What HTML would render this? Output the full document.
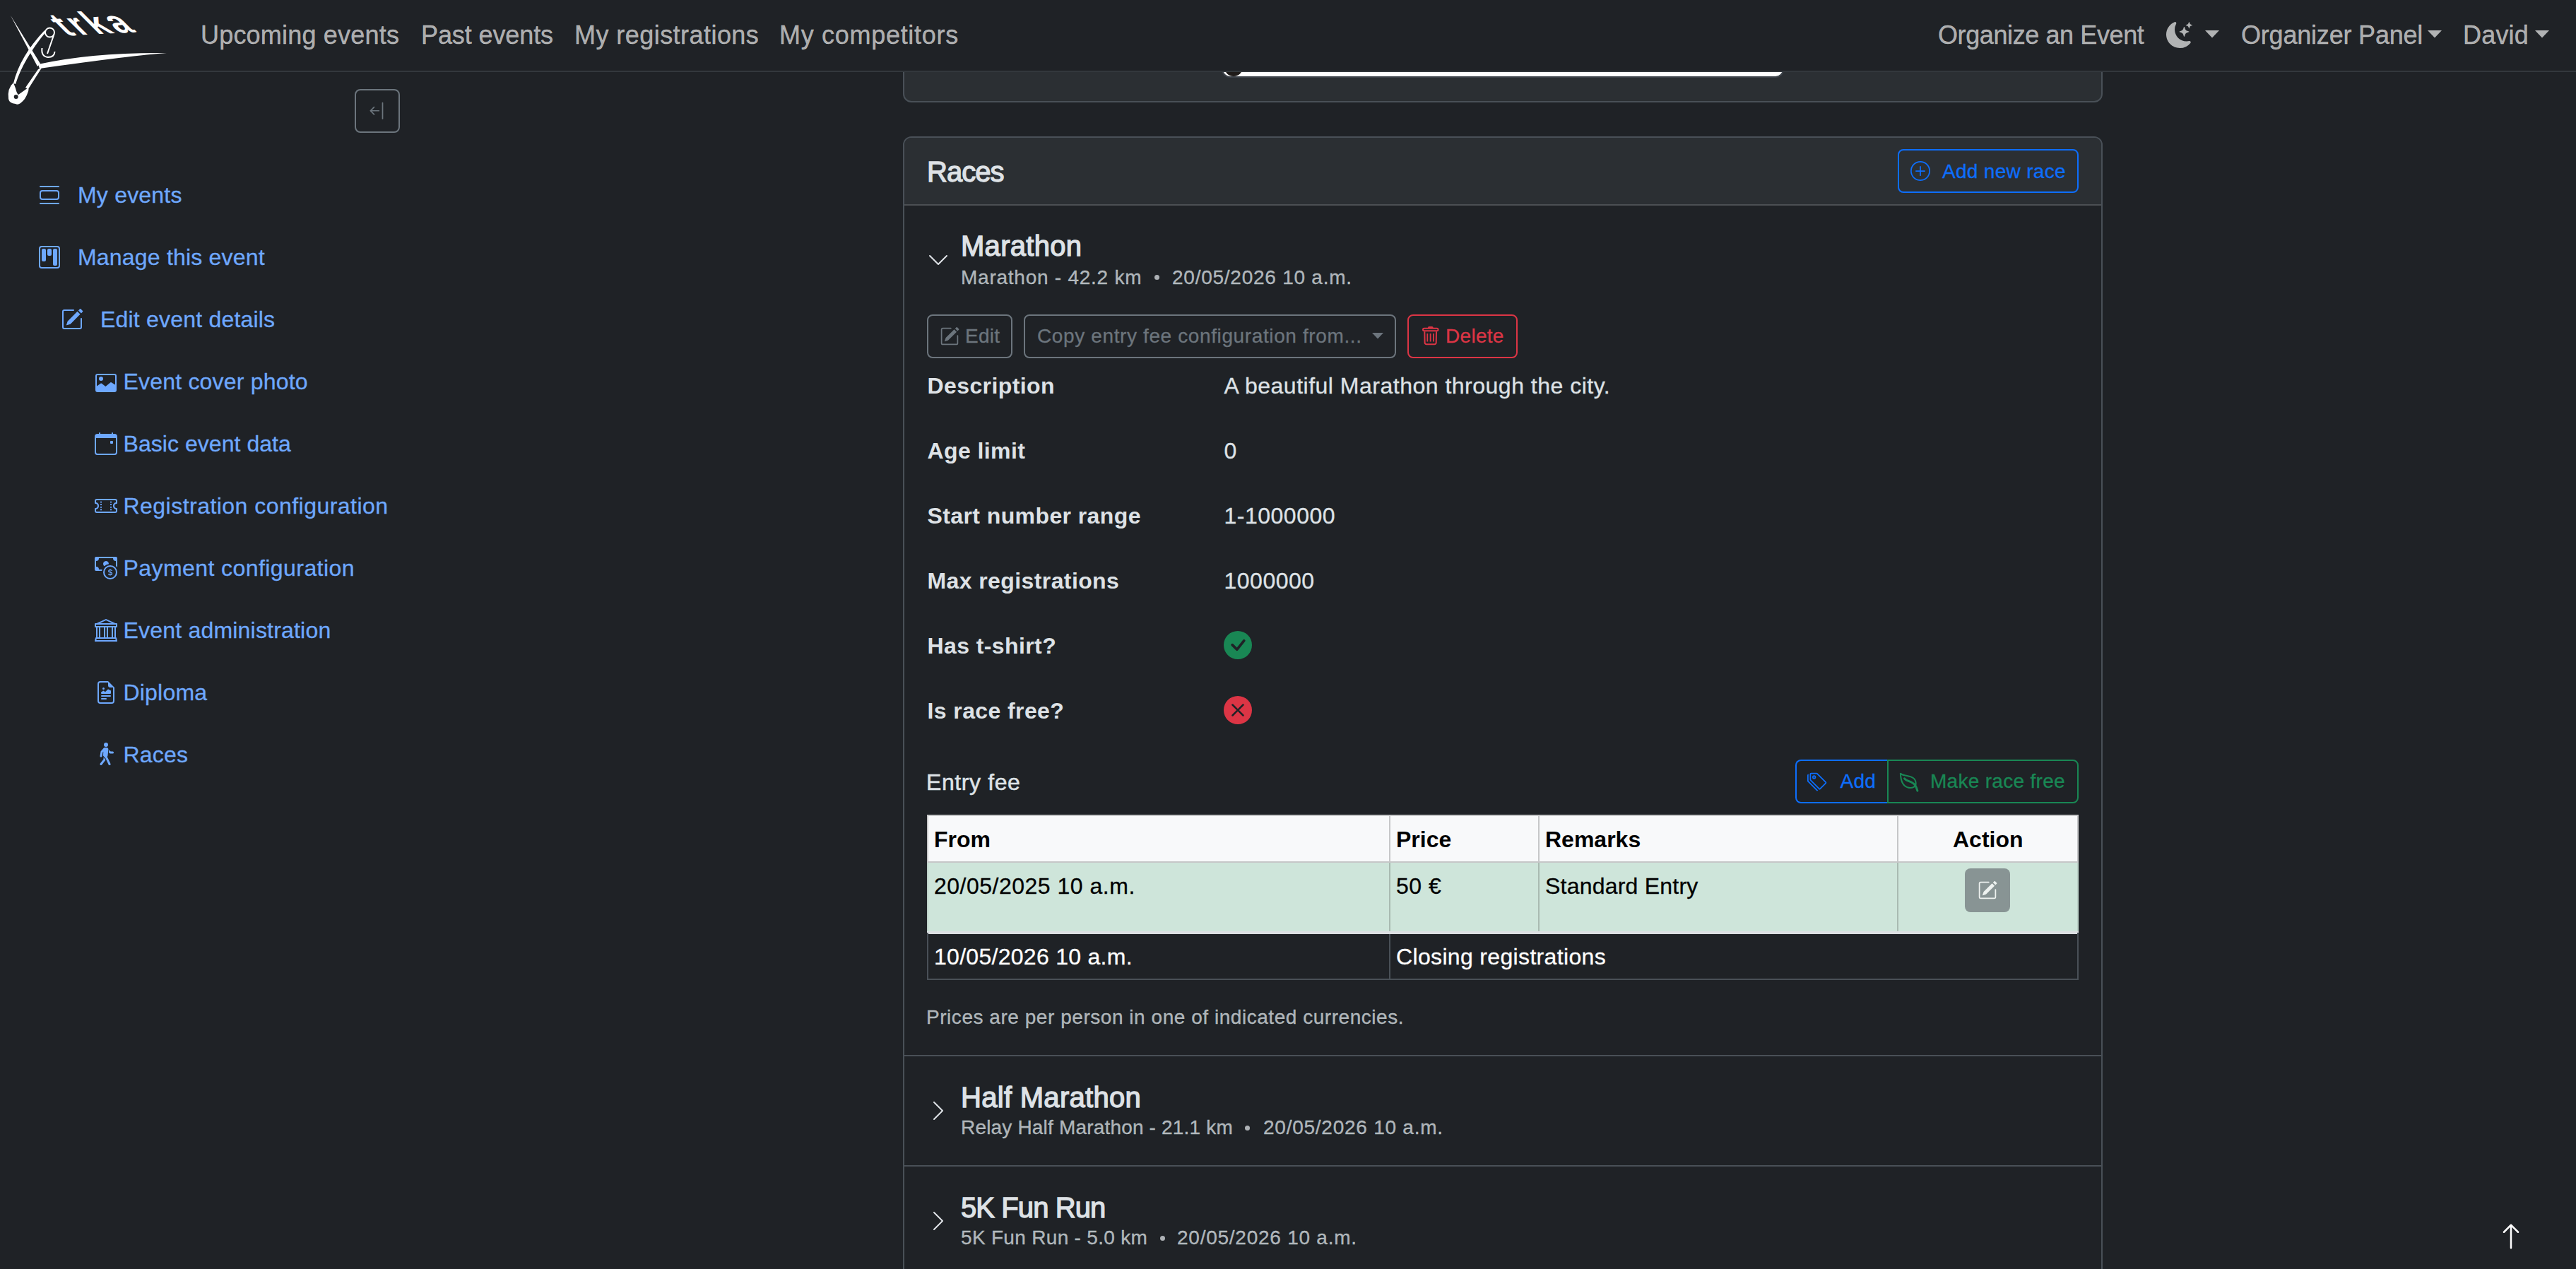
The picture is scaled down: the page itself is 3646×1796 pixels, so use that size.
<!DOCTYPE html>
<html lang="en">
<head>
<meta charset="utf-8">
<title>Races</title>
<style>
html,body{margin:0;padding:0;}
html{background:#1f2226;}
@media (max-width:2400px){html{zoom:0.5;}}
body{width:3646px;height:1796px;position:relative;overflow:hidden;background:#1f2226;font-family:"Liberation Sans",sans-serif;color:#dee2e6;}
.t{position:absolute;white-space:nowrap;line-height:1;-webkit-text-stroke:0.3px currentColor;}
.ic{position:absolute;display:block;}
.nav{color:rgba(255,255,255,.65);font-size:36px;top:31.8px;letter-spacing:0.2px;}
.sb{color:#6ea8fe;font-size:32px;letter-spacing:0.2px;}
.box{position:absolute;box-sizing:border-box;}
.hd{font-size:40px;font-weight:700;color:#dee2e6;}
.bt{font-size:28px;letter-spacing:0.3px;}
.ti{font-size:40px;font-weight:700;color:#dee2e6;letter-spacing:0.3px;}
.sub{font-size:28px;color:rgba(222,226,230,.75);letter-spacing:0.75px;}
.lb{font-size:32px;font-weight:700;color:#dee2e6;letter-spacing:0.4px;}
.vl{font-size:32px;color:#dee2e6;letter-spacing:0.5px;}
.h6{font-size:32px;color:#dee2e6;}
.th{font-size:32px;font-weight:700;color:#000;}
.td{font-size:32px;letter-spacing:0.5px;}
.lb,.th{-webkit-text-stroke:0;}
.hd,.ti{font-weight:400;-webkit-text-stroke:1.3px currentColor;}
</style>
</head>
<body>
<!-- top card under navbar -->
<div class="box" style="left:1278px;top:-20px;width:1698px;height:165px;border:2px solid #495057;border-radius:12px;background:#2b2f33;"></div>
<div class="box" style="left:1729px;top:90px;width:796px;height:20px;background:#fff;border-radius:0 0 12px 12px;border:2px solid #3d434a;border-top:0;"></div>
<div class="box" style="left:1733px;top:80px;width:26px;height:28px;background:#1f1b19;border-radius:0 0 14px 14px;"></div>

<!-- navbar -->
<div class="box" style="left:0;top:0;width:3646px;height:102px;background:#1f2226;border-bottom:2px solid #33383d;"></div>

<!-- logo -->
<svg class="ic" style="left:0;top:0" width="240" height="160" viewBox="0 0 240 160">
  <g fill="#fff" stroke="none">
    <path d="M15 22 L57 90 L53 94 Z"/>
    <path d="M54 91 Q130 74 236 75 Q190 78 56 97 Z"/>
    <path d="M54 98 L59 96 L40 126 L36 124 Z"/>
    <path d="M19 118 Q28 80 63 43 L65 45 Q33 84 22 119 Z"/>
    <path d="M12 140 Q10 125 19 117 L22 125 Q24 133 26 134 L40 124 Q42 128 35 140 Q27 150 22 147 Q13 146 12 140 Z"/>
  </g>
  <circle cx="22.7" cy="137" r="3" fill="#1f2226"/>
  <g fill="none" stroke="#fff" stroke-width="2">
    <circle cx="70.5" cy="46" r="6.5"/>
    <path d="M76 50 L67 76"/>
    <path d="M59.5 68 Q58 80 68 81 Q77 81 77.5 73"/>
  </g>
  <text x="0" y="0" transform="translate(94 50.5) rotate(-3) skewX(42)" font-family="Liberation Sans" font-weight="700" font-size="46" fill="#fff" letter-spacing="5">trka</text>
</svg>

<div class="t nav" style="left:284px">Upcoming events</div>
<div class="t nav" style="left:596px;letter-spacing:-0.1px">Past events</div>
<div class="t nav" style="left:813px;letter-spacing:0.45px">My registrations</div>
<div class="t nav" style="left:1103px;letter-spacing:0.7px">My competitors</div>
<div class="t nav" style="left:2743px;letter-spacing:-0.4px">Organize an Event</div>
<svg class="ic" style="left:3066px;top:30.5px" width="37" height="37" viewBox="0 0 16 16" fill="#b1b3b4"><path d="M6 .278a.77.77 0 0 1 .08.858 7.2 7.2 0 0 0-.878 3.46c0 4.021 3.278 7.277 7.318 7.277q.792-.001 1.533-.16a.79.79 0 0 1 .81.316.73.73 0 0 1-.031.893A8.35 8.35 0 0 1 8.344 16C3.734 16 0 12.286 0 7.71 0 4.266 2.114 1.312 5.124.06A.75.75 0 0 1 6 .278"/><path d="M10.794 3.148a.217.217 0 0 1 .412 0l.387 1.162c.173.518.579.924 1.097 1.097l1.162.387a.217.217 0 0 1 0 .412l-1.162.387a1.73 1.73 0 0 0-1.097 1.097l-.387 1.162a.217.217 0 0 1-.412 0l-.387-1.162A1.73 1.73 0 0 0 9.31 6.593l-1.162-.387a.217.217 0 0 1 0-.412l1.162-.387a1.73 1.73 0 0 0 1.097-1.097zM13.863.099a.145.145 0 0 1 .274 0l.258.774c.115.346.386.617.732.732l.774.258a.145.145 0 0 1 0 .274l-.774.258a1.16 1.16 0 0 0-.732.732l-.258.774a.145.145 0 0 1-.274 0l-.258-.774a1.16 1.16 0 0 0-.732-.732l-.774-.258a.145.145 0 0 1 0-.274l.774-.258c.346-.115.617-.386.732-.732z"/></svg>
<svg class="ic" style="left:3121px;top:42.5px" width="20" height="11" viewBox="0 0 20 11"><path d="M0 0H20L10 10.5Z" fill="#b1b3b4"/></svg>
<div class="t nav" style="left:3172px;letter-spacing:-0.2px">Organizer Panel</div>
<svg class="ic" style="left:3436px;top:42.5px" width="20" height="11" viewBox="0 0 20 11"><path d="M0 0H20L10 10.5Z" fill="#b1b3b4"/></svg>
<div class="t nav" style="left:3486px">David</div>
<svg class="ic" style="left:3588px;top:42.5px" width="20" height="11" viewBox="0 0 20 11"><path d="M0 0H20L10 10.5Z" fill="#b1b3b4"/></svg>

<!-- sidebar toggle -->
<div class="box" style="left:502px;top:126px;width:64px;height:62px;border:2px solid #6c757d;border-radius:8px;"></div>
<svg class="ic" style="left:520.4px;top:143.1px" width="27.5" height="27.5" viewBox="0 0 16 16" fill="#6c757d"><path fill-rule="evenodd" d="M12.5 15a.5.5 0 0 1-.5-.5v-13a.5.5 0 0 1 1 0v13a.5.5 0 0 1-.5.5M10 8a.5.5 0 0 1-.5.5H3.707l2.147 2.146a.5.5 0 0 1-.708.708l-3-3a.5.5 0 0 1 0-.708l3-3a.5.5 0 1 1 .708.708L3.707 7.5H9.5a.5.5 0 0 1 .5.5"/></svg>

<!-- sidebar -->
<svg class="ic" style="left:54px;top:260px" width="32" height="32" viewBox="0 0 16 16" fill="#6ea8fe"><path d="M3 4.5h10a2 2 0 0 1 2 2v3a2 2 0 0 1-2 2H3a2 2 0 0 1-2-2v-3a2 2 0 0 1 2-2m0 1a1 1 0 0 0-1 1v3a1 1 0 0 0 1 1h10a1 1 0 0 0 1-1v-3a1 1 0 0 0-1-1zM1 2a.5.5 0 0 1 .5-.5h13a.5.5 0 0 1 0 1h-13A.5.5 0 0 1 1 2m0 12a.5.5 0 0 1 .5-.5h13a.5.5 0 0 1 0 1h-13A.5.5 0 0 1 1 14"/></svg>
<div class="t sb" style="left:110px;top:260.1px">My events</div>
<svg class="ic" style="left:54px;top:348px" width="32" height="32" viewBox="0 0 16 16" fill="#6ea8fe"><path d="M13.5 1a1 1 0 0 1 1 1v12a1 1 0 0 1-1 1h-11a1 1 0 0 1-1-1V2a1 1 0 0 1 1-1zm-11-1a2 2 0 0 0-2 2v12a2 2 0 0 0 2 2h11a2 2 0 0 0 2-2V2a2 2 0 0 0-2-2z"/><path d="M6.5 3a1 1 0 0 1 1-1h1a1 1 0 0 1 1 1v3a1 1 0 0 1-1 1h-1a1 1 0 0 1-1-1zm-4 0a1 1 0 0 1 1-1h1a1 1 0 0 1 1 1v7a1 1 0 0 1-1 1h-1a1 1 0 0 1-1-1zm8 0a1 1 0 0 1 1-1h1a1 1 0 0 1 1 1v10a1 1 0 0 1-1 1h-1a1 1 0 0 1-1-1z"/></svg>
<div class="t sb" style="left:110px;top:348.1px">Manage this event</div>
<svg class="ic" style="left:86px;top:436px" width="32" height="32" viewBox="0 0 16 16" fill="#6ea8fe"><path d="M15.502 1.94a.5.5 0 0 1 0 .706L14.459 3.69l-2-2L13.502.646a.5.5 0 0 1 .707 0l1.293 1.293zm-1.75 2.456-2-2L4.939 9.21a.5.5 0 0 0-.121.196l-.805 2.414a.25.25 0 0 0 .316.316l2.414-.805a.5.5 0 0 0 .196-.12l6.813-6.814z"/><path fill-rule="evenodd" d="M1 13.5A1.5 1.5 0 0 0 2.5 15h11a1.5 1.5 0 0 0 1.5-1.5v-6a.5.5 0 0 0-1 0v6a.5.5 0 0 1-.5.5h-11a.5.5 0 0 1-.5-.5v-11a.5.5 0 0 1 .5-.5H9a.5.5 0 0 0 0-1H2.5A1.5 1.5 0 0 0 1 2.5z"/></svg>
<div class="t sb" style="left:142px;top:436.1px">Edit event details</div>
<svg class="ic" style="left:134px;top:526px" width="32" height="32" viewBox="0 0 16 16" fill="#6ea8fe"><path d="M2 1.5h12A1.5 1.5 0 0 1 15.5 3v10a1.5 1.5 0 0 1-1.5 1.5H2A1.5 1.5 0 0 1 .5 13V3A1.5 1.5 0 0 1 2 1.5m0 1a.5.5 0 0 0-.5.5v7.2l2.9-1.9a.5.5 0 0 1 .6.05l2.7 2.2 3.5-2.9a.5.5 0 0 1 .6-.05l2.7 1.6V3a.5.5 0 0 0-.5-.5z"/><circle cx="4.5" cy="5" r="1.5"/></svg>
<div class="t sb" style="left:174.5px;top:524.1px">Event cover photo</div>
<svg class="ic" style="left:134px;top:612px" width="32" height="32" viewBox="0 0 16 16" fill="#6ea8fe"><path d="M11 6.5a.5.5 0 0 1 .5-.5h1a.5.5 0 0 1 .5.5v1a.5.5 0 0 1-.5.5h-1a.5.5 0 0 1-.5-.5z"/><path d="M3.5 0a.5.5 0 0 1 .5.5V1h8V.5a.5.5 0 0 1 1 0V1h1a2 2 0 0 1 2 2v11a2 2 0 0 1-2 2H2a2 2 0 0 1-2-2V3a2 2 0 0 1 2-2h1V.5a.5.5 0 0 1 .5-.5M1 4v10a1 1 0 0 0 1 1h12a1 1 0 0 0 1-1V4z"/></svg>
<div class="t sb" style="left:174.5px;top:612.1px;letter-spacing:0.05px">Basic event data</div>
<svg class="ic" style="left:134px;top:700px" width="32" height="32" viewBox="0 0 16 16" fill="#6ea8fe"><path d="M4 4.85v.9h1v-.9zm7 0v.9h1v-.9zm-7 1.8v.9h1v-.9zm7 0v.9h1v-.9zm-7 1.8v.9h1v-.9zm7 0v.9h1v-.9zm-7 1.8v.9h1v-.9zm7 0v.9h1v-.9z"/><path d="M1.5 3A1.5 1.5 0 0 0 0 4.5V6a.5.5 0 0 0 .5.5 1.5 1.5 0 1 1 0 3 .5.5 0 0 0-.5.5v1.5A1.5 1.5 0 0 0 1.5 13h13a1.5 1.5 0 0 0 1.5-1.5V10a.5.5 0 0 0-.5-.5 1.5 1.5 0 0 1 0-3A.5.5 0 0 0 16 6V4.5A1.5 1.5 0 0 0 14.5 3zM1 4.5a.5.5 0 0 1 .5-.5h13a.5.5 0 0 1 .5.5v1.05a2.5 2.5 0 0 0 0 4.9v1.05a.5.5 0 0 1-.5.5h-13a.5.5 0 0 1-.5-.5v-1.05a2.5 2.5 0 0 0 0-4.9z"/></svg>
<div class="t sb" style="left:174.5px;top:700.1px;letter-spacing:0.47px">Registration configuration</div>
<svg class="ic" style="left:134px;top:788px" width="32" height="32" viewBox="0 0 16 16" fill="#6ea8fe"><path d="M11 15a4 4 0 1 0 0-8 4 4 0 0 0 0 8m5-4a5 5 0 1 1-10 0 5 5 0 0 1 10 0"/><path d="M9.438 11.944c.047.596.518 1.06 1.363 1.116v.44h.375v-.443c.875-.061 1.386-.529 1.386-1.207 0-.618-.39-.936-1.09-1.1l-.296-.07v-1.2c.376.043.614.248.671.532h.658c-.047-.575-.54-1.024-1.329-1.073V8.5h-.375v.45c-.747.073-1.255.522-1.255 1.158 0 .562.378.92 1.007 1.066l.248.061v1.272c-.384-.058-.639-.27-.696-.563h-.668zm1.36-1.354c-.369-.085-.569-.26-.569-.522 0-.294.216-.514.572-.578v1.1zm.432.746c.449.104.655.272.655.569 0 .339-.257.571-.709.614v-1.195z"/><path d="M1 0a1 1 0 0 0-1 1v8a1 1 0 0 0 1 1h4.083q.088-.517.258-1H3a2 2 0 0 0-2-2V3a2 2 0 0 0 2-2h10a2 2 0 0 0 2 2v3.528c.38.34.717.728 1 1.154V1a1 1 0 0 0-1-1z"/><path d="M9.998 5.083 10 5a2 2 0 1 0-3.132 1.65 6 6 0 0 1 3.13-1.567"/></svg>
<div class="t sb" style="left:174.5px;top:788.1px;letter-spacing:0.43px">Payment configuration</div>
<svg class="ic" style="left:134px;top:876px" width="32" height="32" viewBox="0 0 16 16" fill="#6ea8fe"><path d="m8 0 6.61 3h.89a.5.5 0 0 1 .5.5v2a.5.5 0 0 1-.5.5H15v7a.5.5 0 0 1 .485.38l.5 2a.498.498 0 0 1-.485.62H.5a.498.498 0 0 1-.485-.62l.5-2A.5.5 0 0 1 1 13V6H.5a.5.5 0 0 1-.5-.5v-2A.5.5 0 0 1 .5 3h.89zM3.777 3h8.447L8 1zM2 6v7h1V6zm2 0v7h2.5V6zm3.5 0v7h1V6zm2 0v7H12V6zM13 6v7h1V6zm2-1V4H1v1zm-.39 9H1.39l-.25 1h13.72z"/></svg>
<div class="t sb" style="left:174.5px;top:876.1px">Event administration</div>
<svg class="ic" style="left:134px;top:964px" width="32" height="32" viewBox="0 0 16 16" fill="#6ea8fe"><path d="M14 4.5V14a2 2 0 0 1-2 2H4a2 2 0 0 1-2-2V2a2 2 0 0 1 2-2h5.5zm-3 0A1.5 1.5 0 0 1 9.5 3V1H4a1 1 0 0 0-1 1v12a1 1 0 0 0 1 1h8a1 1 0 0 0 1-1V4.5z"/><path d="M4.5 12.5A.5.5 0 0 1 5 12h3a.5.5 0 0 1 0 1H5a.5.5 0 0 1-.5-.5m0-2A.5.5 0 0 1 5 10h6a.5.5 0 0 1 0 1H5a.5.5 0 0 1-.5-.5m1.639-3.708 1.33.886 1.854-1.855a.25.25 0 0 1 .289-.047l1.888.974V8.5a.5.5 0 0 1-.5.5H5a.5.5 0 0 1-.5-.5V8s1.54-1.274 1.639-1.208M6.25 6a.75.75 0 1 0 0-1.5.75.75 0 0 0 0 1.5"/></svg>
<div class="t sb" style="left:174.5px;top:964.1px">Diploma</div>
<svg class="ic" style="left:134px;top:1051px" width="32" height="32" viewBox="0 0 16 16" fill="#6ea8fe"><path d="M9.5 1.5a1.5 1.5 0 1 1-3 0 1.5 1.5 0 0 1 3 0M6.44 3.752A.75.75 0 0 1 7 3.5h1.445c.742 0 1.32.643 1.243 1.38l-.43 4.083a1.8 1.8 0 0 1-.088.395l-.318.906.213.242a.8.8 0 0 1 .114.175l2 4.25a.75.75 0 1 1-1.357.638l-1.956-4.154-1.68-1.921A.75.75 0 0 1 6 8.96l.138-2.613-.435.489-.464 2.786a.75.75 0 1 1-1.48-.246l.5-3a.75.75 0 0 1 .18-.375l2-2.25Z"/><path d="M6.25 11.745v-1.418l1.204 1.375.261.524a.8.8 0 0 1-.12.231l-2.5 3.25a.75.75 0 1 1-1.19-.914zm4.22-4.215-.494-.494.205-1.843.006-.067 1.124 1.124h1.44a.75.75 0 0 1 0 1.5H11a.75.75 0 0 1-.53-.22Z"/></svg>
<div class="t sb" style="left:174.5px;top:1052.1px">Races</div>


<!-- Races card -->
<div class="box" style="left:1278px;top:193px;width:1698px;height:1700px;border:2px solid #495057;border-radius:12px;background:#1f2226;overflow:hidden;">
  <div class="box" style="left:0;top:0;width:100%;height:96px;background:#2b2f33;border-bottom:2px solid #4b4f53;"></div>
</div>
<div class="t hd" style="left:1312px;top:223.1px;letter-spacing:-1px">Races</div>
<div class="box" style="left:2686px;top:211px;width:256px;height:62px;border:2px solid #0d6efd;border-radius:8px;"></div>
<svg class="ic" style="left:2704px;top:228px" width="28" height="28" viewBox="0 0 16 16" fill="#0d6efd"><path d="M8 15A7 7 0 1 1 8 1a7 7 0 0 1 0 14m0 1A8 8 0 1 0 8 0a8 8 0 0 0 0 16"/><path d="M8 4a.5.5 0 0 1 .5.5v3h3a.5.5 0 0 1 0 1h-3v3a.5.5 0 0 1-1 0v-3h-3a.5.5 0 0 1 0-1h3v-3A.5.5 0 0 1 8 4"/></svg>
<div class="t bt" style="left:2749px;top:228.5px;color:#0d6efd">Add new race</div>

<!-- Marathon -->
<svg class="ic" style="left:1311.7px;top:351.7px" width="32" height="32" viewBox="0 0 16 16" fill="#dee2e6"><path fill-rule="evenodd" d="M1.646 4.646a.5.5 0 0 1 .708 0L8 10.293l5.646-5.647a.5.5 0 0 1 .708.708l-6 6a.5.5 0 0 1-.708 0l-6-6a.5.5 0 0 1 0-.708"/></svg>
<div class="t ti" style="left:1360px;top:328.4px">Marathon</div>
<div class="t sub" style="left:1360px;top:378.5px">Marathon - 42.2 km</div>
<div class="box" style="left:1634px;top:389px;width:7px;height:7px;border-radius:50%;background:rgba(222,226,230,.75)"></div>
<div class="t sub" style="left:1659px;top:378.5px">20/05/2026 10 a.m.</div>

<!-- buttons -->
<div class="box" style="left:1312px;top:445px;width:121px;height:62px;border:2px solid #6c757d;border-radius:8px;"></div>
<svg class="ic" style="left:1330px;top:461.5px" width="28" height="28" viewBox="0 0 16 16" fill="#6c757d"><path d="M15.502 1.94a.5.5 0 0 1 0 .706L14.459 3.69l-2-2L13.502.646a.5.5 0 0 1 .707 0l1.293 1.293zm-1.75 2.456-2-2L4.939 9.21a.5.5 0 0 0-.121.196l-.805 2.414a.25.25 0 0 0 .316.316l2.414-.805a.5.5 0 0 0 .196-.12l6.813-6.814z"/><path fill-rule="evenodd" d="M1 13.5A1.5 1.5 0 0 0 2.5 15h11a1.5 1.5 0 0 0 1.5-1.5v-6a.5.5 0 0 0-1 0v6a.5.5 0 0 1-.5.5h-11a.5.5 0 0 1-.5-.5v-11a.5.5 0 0 1 .5-.5H9a.5.5 0 0 0 0-1H2.5A1.5 1.5 0 0 0 1 2.5z"/></svg>
<div class="t bt" style="left:1366px;top:462.3px;color:#6c757d">Edit</div>
<div class="box" style="left:1449px;top:445px;width:527px;height:62px;border:2px solid #6c757d;border-radius:8px;"></div>
<div class="t bt" style="left:1468px;top:462.3px;color:#6c757d;letter-spacing:0.62px">Copy entry fee configuration from...</div>
<svg class="ic" style="left:1942px;top:470.5px" width="16" height="9" viewBox="0 0 16 9"><path d="M0 0H16L8 8.5Z" fill="#6c757d"/></svg>
<div class="box" style="left:1992px;top:445px;width:156px;height:62px;border:2px solid #dc3545;border-radius:8px;"></div>
<svg class="ic" style="left:2010px;top:460px" width="30" height="32" viewBox="0 0 30 32" fill="none" stroke="#dc3545"><rect x="4" y="4.8" width="21.5" height="3.4" rx="1.7" stroke-width="2"/><rect x="11" y="2" width="7.5" height="3" rx="1.5" fill="#dc3545" stroke="none"/><path d="M6.3 9.2 L6.6 25 Q6.7 27.2 9.2 27.2 H20.2 Q22.6 27.2 22.7 25 L23 9.2" stroke-width="2"/><path d="M10.3 12 V23.5 M14.6 12 V23.5 M18.9 12 V23.5" stroke-width="1.8"/></svg>
<div class="t bt" style="left:2046px;top:462.3px;color:#dc3545">Delete</div>

<!-- dl -->
<div class="t lb" style="left:1312.5px;top:530.2px">Description</div>
<div class="t vl" style="left:1732.5px;top:530.2px">A beautiful Marathon through the city.</div>
<div class="t lb" style="left:1312.5px;top:622.2px">Age limit</div>
<div class="t vl" style="left:1732.5px;top:622.2px">0</div>
<div class="t lb" style="left:1312.5px;top:714.2px">Start number range</div>
<div class="t vl" style="left:1732.5px;top:714.2px">1-1000000</div>
<div class="t lb" style="left:1312.5px;top:806.2px">Max registrations</div>
<div class="t vl" style="left:1732.5px;top:806.2px">1000000</div>
<div class="t lb" style="left:1312.5px;top:898.2px">Has t-shirt?</div>
<svg class="ic" style="left:1732px;top:893px" width="40" height="40" viewBox="0 0 16 16" fill="#198754"><path d="M16 8A8 8 0 1 1 0 8a8 8 0 0 1 16 0m-3.97-3.03a.75.75 0 0 0-1.08.022L7.477 9.417 5.384 7.323a.75.75 0 0 0-1.06 1.06L6.97 11.03a.75.75 0 0 0 1.079-.02l3.992-4.99a.75.75 0 0 0-.01-1.05z"/></svg>
<div class="t lb" style="left:1312.5px;top:990.2px">Is race free?</div>
<svg class="ic" style="left:1732px;top:985px" width="40" height="40" viewBox="0 0 16 16" fill="#dc3545"><path d="M16 8A8 8 0 1 1 0 8a8 8 0 0 1 16 0M5.354 4.646a.5.5 0 1 0-.708.708L7.293 8l-2.647 2.646a.5.5 0 0 0 .708.708L8 8.707l2.646 2.647a.5.5 0 0 0 .708-.708L8.707 8l2.647-2.646a.5.5 0 0 0-.708-.708L8 7.293z"/></svg>

<!-- entry fee -->
<div class="t h6" style="left:1311px;top:1091.2px;letter-spacing:0.6px;-webkit-text-stroke:0.5px #dee2e6">Entry fee</div>
<div class="box" style="left:2541px;top:1075px;width:132px;height:62px;border:2px solid #0d6efd;border-right:0;border-radius:8px 0 0 8px;"></div>
<div class="box" style="left:2671px;top:1075px;width:271px;height:62px;border:2px solid #198754;border-radius:0 8px 8px 0;"></div>
<svg class="ic" style="left:2558px;top:1092px" width="28" height="28" viewBox="0 0 16 16" fill="#0d6efd"><path d="M3 2v4.586l7 7L14.586 9l-7-7zM2 2a1 1 0 0 1 1-1h4.586a1 1 0 0 1 .707.293l7 7a1 1 0 0 1 0 1.414l-4.586 4.586a1 1 0 0 1-1.414 0l-7-7A1 1 0 0 1 2 6.586z"/><path d="M5.5 5a.5.5 0 1 1 0-1 .5.5 0 0 1 0 1m0 1a1.5 1.5 0 1 0 0-3 1.5 1.5 0 0 0 0 3M1 7.086a1 1 0 0 0 .293.707L8.75 15.25l-.043.043a1 1 0 0 1-1.414 0l-7-7A1 1 0 0 1 0 7.586V3a1 1 0 0 1 1-1z"/></svg>
<div class="t bt" style="left:2604.5px;top:1092.3px;color:#0d6efd">Add</div>
<svg class="ic" style="left:2688px;top:1092px" width="30" height="30" viewBox="0 0 16 16" fill="none" stroke="#198754" stroke-width="1.1"><path d="M1 1.2C1.6 2.6 3 2.6 6 3.2 10 4 12.5 5.2 12.6 8.8 12.7 11.6 10 12.6 7.4 12.2 3.6 11.6 1.2 8 1 1.2Z"/><path d="M4 5.2C5.6 7.6 9.5 7 12 10.2 13 11.6 13.4 13 13.8 14.5" stroke-width="1.6" stroke-linecap="round"/></svg>
<div class="t bt" style="left:2732px;top:1092.3px;color:#198754">Make race free</div>

<!-- table -->
<div class="box" style="left:1312px;top:1153px;width:1630px;height:68px;background:#f8f9fa;border:2px solid #c6c7c8;"></div>
<div class="box" style="left:1312px;top:1221px;width:1630px;height:99px;background:#cee5da;border:2px solid #bcd0c7;border-top:0;"></div>
<div class="box" style="left:1312px;top:1318px;width:1630px;height:4px;background:#dcdfe2;"></div>
<div class="box" style="left:1312px;top:1320px;width:1630px;height:67px;border:2px solid #495057;border-top:0;"></div>
<div class="box" style="left:1966px;top:1153px;width:2px;height:68px;background:#c6c7c8"></div>
<div class="box" style="left:2177px;top:1153px;width:2px;height:68px;background:#c6c7c8"></div>
<div class="box" style="left:2685px;top:1153px;width:2px;height:68px;background:#c6c7c8"></div>
<div class="box" style="left:1966px;top:1221px;width:2px;height:97px;background:#a9bab1"></div>
<div class="box" style="left:2177px;top:1221px;width:2px;height:97px;background:#a9bab1"></div>
<div class="box" style="left:2685px;top:1221px;width:2px;height:97px;background:#a9bab1"></div>
<div class="box" style="left:1966px;top:1322px;width:2px;height:64px;background:#495057"></div>
<div class="t th" style="left:1322px;top:1171.9px">From</div>
<div class="t th" style="left:1976px;top:1171.9px">Price</div>
<div class="t th" style="left:2187px;top:1171.9px">Remarks</div>
<div class="t th" style="left:2764px;top:1171.9px">Action</div>
<div class="t td" style="left:1322px;top:1238px;color:#000">20/05/2025 10 a.m.</div>
<div class="t td" style="left:1976px;top:1238px;color:#000">50 €</div>
<div class="t td" style="left:2187px;top:1238px;color:#000;letter-spacing:0.22px">Standard Entry</div>
<div class="box" style="left:2781px;top:1229px;width:64px;height:62px;background:#889494;border-radius:8px;"></div>
<svg class="ic" style="left:2799px;top:1246px" width="28" height="28" viewBox="0 0 16 16" fill="#eef2f0"><path d="M15.502 1.94a.5.5 0 0 1 0 .706L14.459 3.69l-2-2L13.502.646a.5.5 0 0 1 .707 0l1.293 1.293zm-1.75 2.456-2-2L4.939 9.21a.5.5 0 0 0-.121.196l-.805 2.414a.25.25 0 0 0 .316.316l2.414-.805a.5.5 0 0 0 .196-.12l6.813-6.814z"/><path fill-rule="evenodd" d="M1 13.5A1.5 1.5 0 0 0 2.5 15h11a1.5 1.5 0 0 0 1.5-1.5v-6a.5.5 0 0 0-1 0v6a.5.5 0 0 1-.5.5h-11a.5.5 0 0 1-.5-.5v-11a.5.5 0 0 1 .5-.5H9a.5.5 0 0 0 0-1H2.5A1.5 1.5 0 0 0 1 2.5z"/></svg>
<div class="t td" style="left:1322px;top:1338.2px;color:#fff;letter-spacing:0.28px">10/05/2026 10 a.m.</div>
<div class="t td" style="left:1976px;top:1338.2px;color:#fff;letter-spacing:0.34px">Closing registrations</div>

<div class="t sub" style="left:1311px;top:1426.3px;letter-spacing:0.54px">Prices are per person in one of indicated currencies.</div>

<!-- separators -->
<div class="box" style="left:1280px;top:1493px;width:1694px;height:2px;background:#495057"></div>
<svg class="ic" style="left:1311.7px;top:1556px" width="32" height="32" viewBox="0 0 16 16" fill="#dee2e6"><path fill-rule="evenodd" d="M4.646 1.646a.5.5 0 0 1 .708 0l6 6a.5.5 0 0 1 0 .708l-6 6a.5.5 0 0 1-.708-.708L10.293 8 4.646 2.354a.5.5 0 0 1 0-.708"/></svg>
<div class="t ti" style="left:1360px;top:1532.5px">Half Marathon</div>
<div class="t sub" style="left:1360px;top:1582.1px;letter-spacing:0.18px">Relay Half Marathon - 21.1 km</div>
<div class="box" style="left:1762px;top:1592.6px;width:7px;height:7px;border-radius:50%;background:rgba(222,226,230,.75)"></div>
<div class="t sub" style="left:1788px;top:1582.1px">20/05/2026 10 a.m.</div>

<div class="box" style="left:1280px;top:1649px;width:1694px;height:2px;background:#495057"></div>
<svg class="ic" style="left:1311.7px;top:1712px" width="32" height="32" viewBox="0 0 16 16" fill="#dee2e6"><path fill-rule="evenodd" d="M4.646 1.646a.5.5 0 0 1 .708 0l6 6a.5.5 0 0 1 0 .708l-6 6a.5.5 0 0 1-.708-.708L10.293 8 4.646 2.354a.5.5 0 0 1 0-.708"/></svg>
<div class="t ti" style="left:1360px;top:1688.5px;letter-spacing:-0.9px">5K Fun Run</div>
<div class="t sub" style="left:1360px;top:1738.1px;letter-spacing:0.31px">5K Fun Run - 5.0 km</div>
<div class="box" style="left:1641.5px;top:1748.6px;width:7px;height:7px;border-radius:50%;background:rgba(222,226,230,.75)"></div>
<div class="t sub" style="left:1666px;top:1738.1px">20/05/2026 10 a.m.</div>

<!-- back to top -->
<svg class="ic" style="left:3534px;top:1729.5px" width="40" height="40" viewBox="0 0 16 16" fill="#fff"><path fill-rule="evenodd" d="M8 15a.5.5 0 0 0 .5-.5V2.707l3.146 3.147a.5.5 0 0 0 .708-.708l-4-4a.5.5 0 0 0-.708 0l-4 4a.5.5 0 1 0 .708.708L7.5 2.707V14.5a.5.5 0 0 0 .5.5"/></svg>


</body>
</html>
